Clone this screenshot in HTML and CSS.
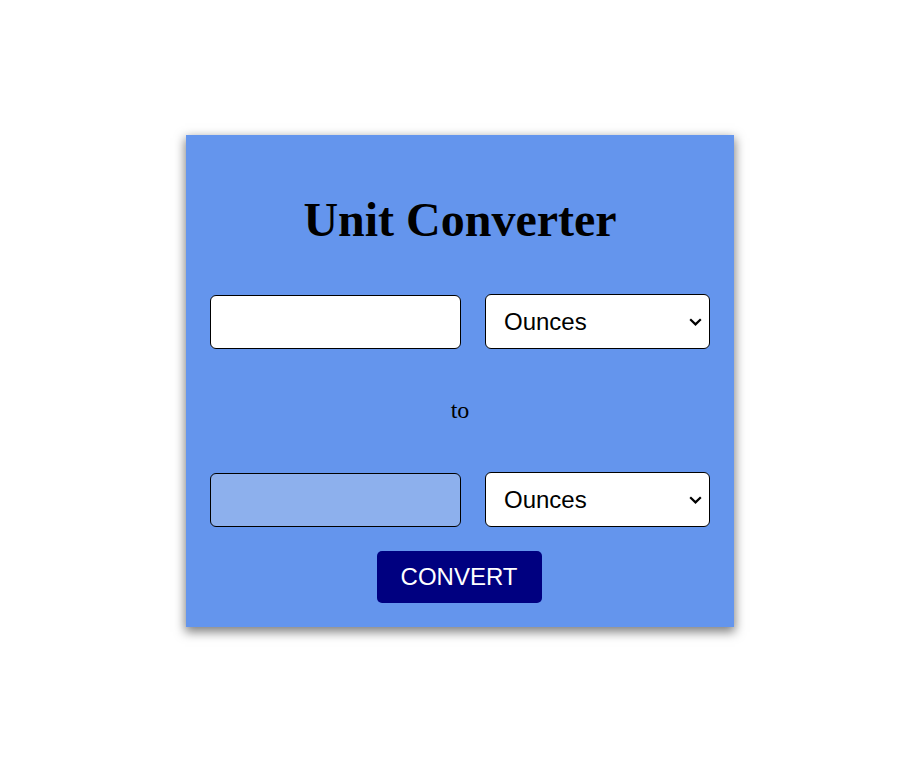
FILE: index.html
```html
<!DOCTYPE html>
<html>
<head>
<meta charset="utf-8">
<title>Unit Converter</title>
<link rel="stylesheet" href="styles.css">
</head>
<body>
<div class="card">
  <h1 class="title">Unit Converter</h1>
  <div class="row first">
    <input class="field" type="text">
    <div class="select-wrap">
      <select class="unit"><option>Ounces</option><option>Grams</option><option>Pounds</option></select>
      <svg class="chev" width="13" height="8" viewBox="0 0 13 8"><path d="M1.2 1.2 L6.5 6.4 L11.8 1.2" fill="none" stroke="#000" stroke-width="2.2"/></svg>
    </div>
  </div>
  <p class="to">to</p>
  <div class="row">
    <input class="field" type="text" disabled>
    <div class="select-wrap">
      <select class="unit"><option>Ounces</option><option>Grams</option><option>Pounds</option></select>
      <svg class="chev" width="13" height="8" viewBox="0 0 13 8"><path d="M1.2 1.2 L6.5 6.4 L11.8 1.2" fill="none" stroke="#000" stroke-width="2.2"/></svg>
    </div>
  </div>
  <div class="actions">
    <button class="convert">CONVERT</button>
  </div>
</div>
</body>
</html>
```
FILE: styles.css
```css
html, body {
  margin: 0;
  padding: 0;
  background: #ffffff;
}
body {
  font-family: "Liberation Serif", "Times New Roman", serif;
  padding-top: 135px;
  min-height: 769px;
  box-sizing: border-box;
}
.card {
  box-sizing: border-box;
  width: 548px;
  height: 492px;
  margin: 0 0 0 186px;
  padding: 0 24px;
  background: #6495ED;
  box-shadow: 0 4px 10px 1px rgba(0,0,0,0.5);
  display: flex;
  flex-direction: column;
}
.title {
  margin: 58px 0 0 0;
  font-size: 48px;
  font-weight: bold;
  text-align: center;
  line-height: 53px;
  color: #000;
}
.row {
  display: flex;
  justify-content: space-between;
  align-items: center;
}
.first { margin-top: 48px; }
.field {
  box-sizing: border-box;
  width: 251px;
  height: 54px;
  border: 1px solid #000;
  border-radius: 6px;
  background: #fff;
  font-family: "Liberation Sans", Arial, sans-serif;
  font-size: 24px;
  padding: 0 10px;
}
.field:disabled {
  background: rgba(239,239,239,0.3);
}
.select-wrap {
  position: relative;
  width: 225px;
  height: 55px;
}
.unit {
  -webkit-appearance: none;
  appearance: none;
  box-sizing: border-box;
  width: 225px;
  height: 55px;
  border: 1px solid #000;
  border-radius: 6px;
  background: #fff;
  font-family: "Liberation Sans", Arial, sans-serif;
  font-size: 24px;
  padding: 0 30px 0 18px;
  color: #000;
}
.chev {
  position: absolute;
  right: 8px;
  top: 24px;
  pointer-events: none;
}
.to {
  margin: 48px 0 48px 0;
  text-align: center;
  font-size: 24px;
  line-height: 27px;
}
.actions {
  display: flex;
  justify-content: center;
  margin-top: 24px;
}
.convert {
  width: 165px;
  height: 52px;
  background: #000080;
  color: #fff;
  border: none;
  border-radius: 5px;
  font-family: "Liberation Sans", Arial, sans-serif;
  font-size: 24px;
  margin-right: 2px;
}
```
